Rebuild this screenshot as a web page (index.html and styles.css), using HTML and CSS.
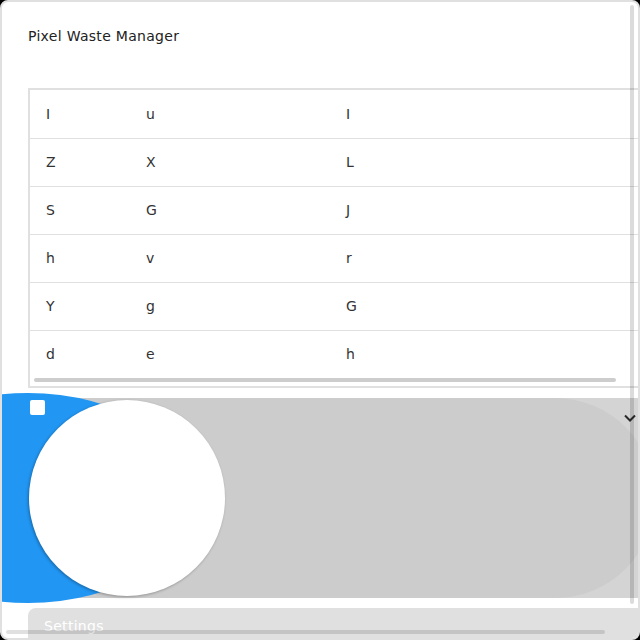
FILE: index.html
```html
<!DOCTYPE html>
<html lang="en">
<head>
<meta charset="utf-8">
<title>Pixel Waste Manager</title>
<link rel="stylesheet" href="styles.css">
</head>
<body>
<div class="card">
  <h1 class="title">Pixel Waste Manager</h1>
  <div class="table-wrap">
    <table class="grid">
      <tr><td class="c1">I</td><td class="c2">u</td><td>I</td></tr>
      <tr><td class="c1">Z</td><td class="c2">X</td><td>L</td></tr>
      <tr><td class="c1">S</td><td class="c2">G</td><td>J</td></tr>
      <tr><td class="c1">h</td><td class="c2">v</td><td>r</td></tr>
      <tr><td class="c1">Y</td><td class="c2">g</td><td>G</td></tr>
      <tr><td class="c1">d</td><td class="c2">e</td><td>h</td></tr>
    </table>
    <div class="hscroll"><div class="hthumb"></div></div>
  </div>
  <div class="switch">
    <div class="track"></div>
    <span class="blue"></span>
    <span class="check"></span>
    <span class="knob"></span>
    <svg class="chev" width="12" height="9" viewBox="0 0 12 9"><polyline points="1,1.5 6,6.5 11,1.5" fill="none" stroke="#2a2a2a" stroke-width="2"/></svg>
  </div>
  <div class="settings" role="button">Settings</div>
  <div class="vbar"></div>
  <div class="hbar"></div>
</div>
</body>
</html>
```
FILE: styles.css
```css
html { background: #000; }
body { margin: 0; }
.card {
  position: relative;
  box-sizing: border-box;
  width: 640px;
  height: 640px;
  border: 2px solid #e0e0e0;
  border-radius: 8px;
  background: #fff;
  overflow: hidden;
  padding: 24px 0 0 26px;
  font-family: "DejaVu Sans", sans-serif;
  color: #222;
}
.title {
  margin: 0 0 42px;
  font-size: 14px;
  font-weight: 400;
  line-height: 20px;
  letter-spacing: 0.3px;
}
.table-wrap {
  box-sizing: border-box;
  width: 720px;
  height: 300px;
  border: 2px solid #e0e0e0;
  overflow: hidden;
}
.grid {
  border-collapse: collapse;
  width: 1000px;
  font-size: 14px;
  color: #333;
}
.grid td {
  box-sizing: border-box;
  height: 48px;
  padding: 0 0 0 16px;
  border-bottom: 1px solid #e0e0e0;
  text-align: left;
  vertical-align: middle;
}
.grid tr:last-child td { border-bottom: none; height: 48px; }
.grid .c1 { width: 100px; }
.grid .c2 { width: 200px; }
.hscroll { height: 8px; }
.hthumb {
  margin-left: 4px;
  width: 582px;
  height: 4px;
  border-radius: 2px;
  background: #cdcdcd;
}
.switch {
  position: relative;
  display: flex;
  width: 700px;
  height: 200px;
  margin-top: 10px;
  background: #d4d4d4;
}
.track {
  width: 627px;
  height: 100%;
  background: #ccc;
  border-radius: 0 100px 100px 0;
}
.blue {
  position: absolute;
  left: -165px;
  top: -5px;
  width: 330px;
  height: 210px;
  border-radius: 50%;
  background: #2196f3;
}
.check {
  position: absolute;
  left: 2px;
  top: 2px;
  width: 15px;
  height: 15px;
  border-radius: 2px;
  background: #fff;
}
.knob {
  position: absolute;
  left: 1px;
  top: 2px;
  width: 196px;
  height: 196px;
  border-radius: 50%;
  background: #fff;
  box-shadow: -1px 1px 3px rgba(0,0,0,0.3);
}
.chev {
  position: absolute;
  left: 596px;
  top: 16px;
}
.settings {
  box-sizing: border-box;
  width: 640px;
  height: 40px;
  margin-top: 10px;
  padding: 8px 0 0 16px;
  border-radius: 8px 0 0 0;
  background: #e0e0e0;
  color: #fff;
  font-size: 14px;
  line-height: 20px;
  letter-spacing: 0.3px;
}
.vbar {
  position: absolute;
  left: 628px;
  top: 3px;
  width: 4px;
  height: 599px;
  border-radius: 2px;
  background: rgba(0,0,0,0.14);
}
.hbar {
  position: absolute;
  left: 4px;
  top: 628px;
  width: 599px;
  height: 4px;
  border-radius: 2px;
  background: rgba(0,0,0,0.12);
}
```
